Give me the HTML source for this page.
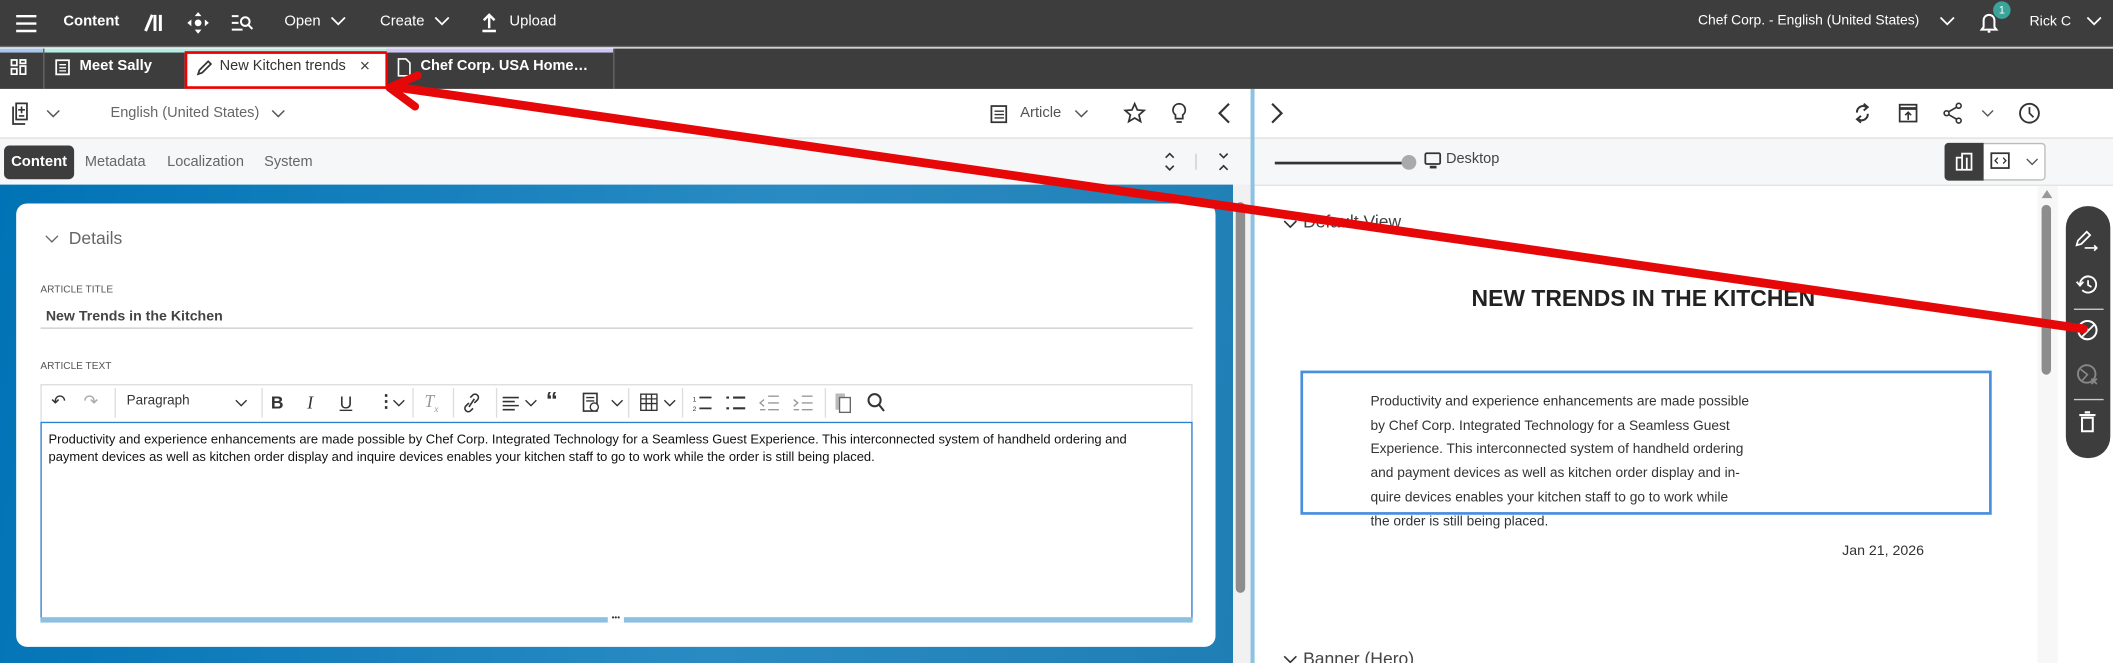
<!DOCTYPE html>
<html><head><meta charset="utf-8">
<style>
*{box-sizing:border-box;margin:0;padding:0}
html,body{width:2113px;height:663px;overflow:hidden;background:#fff}
#w{position:absolute;left:0;top:0;width:1568px;height:492px;transform:scale(1.34758);transform-origin:0 0;font-family:"Liberation Sans",sans-serif;color:#333;overflow:hidden}
.a{position:absolute;white-space:nowrap}
.wt{color:#fff}
.t12{font-size:11px}
svg{overflow:visible}
</style></head><body><div id="w">

<!-- top bar -->
<div class="a" style="left:0;top:0;width:1568px;height:35px;background:#3d3d3d;border-bottom:1px solid #6a6a6a"></div>
<svg class="a" style="left:12px;top:11px" width="16" height="13"><path d="M0 1h15M0 6.5h15M0 12h15" stroke="#fff" stroke-width="1.8"/></svg>
<div class="a wt t12" style="left:47px;top:10px;font-weight:bold">Content</div>
<svg class="a" style="left:106px;top:9px" width="16" height="16"><path d="M2 14L7 2M9 2v12M13 2v12" stroke="#fff" stroke-width="2.2"/></svg>
<svg class="a" style="left:139px;top:9px" width="16" height="16"><circle cx="8" cy="8" r="2.5" fill="#fff"/><path d="M8 0l-2.5 3h5zM8 16l-2.5-3h5zM0 8l3-2.5v5zM16 8l-3-2.5v5z" fill="#fff"/></svg>
<svg class="a" style="left:172px;top:10px" width="16" height="14"><path d="M0 2h5M0 7h5M0 12h8" stroke="#fff" stroke-width="1.5"/><circle cx="10" cy="6" r="3.2" fill="none" stroke="#fff" stroke-width="1.5"/><path d="M12.3 8.5l3 3" stroke="#fff" stroke-width="1.5"/></svg>
<div class="a wt t12" style="left:211px;top:10px">Open</div>
<svg class="a" style="left:246px;top:13px" width="10" height="6"><path d="M0 0l5 5 5-5" fill="none" stroke="#fff" stroke-width="1.3"/></svg>
<div class="a wt t12" style="left:282px;top:10px">Create</div>
<svg class="a" style="left:323px;top:13px" width="10" height="6"><path d="M0 0l5 5 5-5" fill="none" stroke="#fff" stroke-width="1.3"/></svg>
<svg class="a" style="left:357px;top:9px" width="12" height="15"><path d="M6 12V2M2 6l4-4 4 4M1 14h10" fill="none" stroke="#fff" stroke-width="1.8"/></svg>
<div class="a wt t12" style="left:378px;top:10px">Upload</div>
<div class="a wt" style="left:1260px;top:10px;font-size:10.3px">Chef Corp. - English (United States)</div>
<svg class="a" style="left:1440px;top:13px" width="10" height="6"><path d="M0 0l5 5 5-5" fill="none" stroke="#fff" stroke-width="1.3"/></svg>
<svg class="a" style="left:1469px;top:8px" width="14" height="17"><path d="M3 12V7a4 4 0 0 1 8 0v5l1.5 2h-11z" fill="none" stroke="#fff" stroke-width="1.5"/><path d="M6 15.5h2" stroke="#fff" stroke-width="1.5"/></svg>
<div class="a" style="left:1479px;top:1px;width:13px;height:13px;border-radius:50%;background:#3aa39a;color:#fff;font-size:8px;text-align:center;line-height:13px">1</div>
<div class="a wt" style="left:1506px;top:10px;font-size:10.5px">Rick C</div>
<svg class="a" style="left:1549px;top:13px" width="10" height="6"><path d="M0 0l5 5 5-5" fill="none" stroke="#fff" stroke-width="1.3"/></svg>

<!-- tab bar -->
<div class="a" style="left:0;top:36px;width:1568px;height:30px;background:#3d3d3d"></div>
<div class="a" style="left:0;top:36px;width:32px;height:3px;background:#a9c7ea"></div>
<svg class="a" style="left:8px;top:44px" width="12" height="12"><g fill="none" stroke="#fff" stroke-width="1.3"><rect x=".5" y=".5" width="4" height="4"/><rect x="7" y=".5" width="4" height="2.5"/><rect x=".5" y="7" width="4" height="4"/><rect x="7" y="5" width="4" height="6"/></g></svg>
<div class="a" style="left:32px;top:36px;width:1px;height:30px;background:#666"></div>
<div class="a" style="left:33px;top:36px;width:104px;height:3px;background:#b7ebe2"></div>
<svg class="a" style="left:41px;top:44px" width="11" height="12"><rect x=".7" y=".7" width="9.5" height="10.5" fill="none" stroke="#fff" stroke-width="1.3"/><path d="M3 4h5M3 6.3h5M3 8.6h5" stroke="#fff" stroke-width="1"/></svg>
<div class="a wt t12" style="left:59px;top:43px;font-weight:bold">Meet Sally</div>
<div class="a" style="left:137px;top:36px;width:150px;height:30px;background:#fff"></div>
<div class="a" style="left:137px;top:36px;width:150px;height:3px;background:#b7ebe2"></div>
<div class="a" style="left:137px;top:38px;width:151px;height:28px;border:2px solid #e00"></div>
<svg class="a" style="left:146px;top:44px" width="12" height="12"><path d="M1 11l1-3 6.5-6.5 2 2L4 10z" fill="none" stroke="#333" stroke-width="1.3"/></svg>
<div class="a" style="left:163px;top:43px;color:#333;font-size:10.8px">New Kitchen trends</div>
<div class="a" style="left:267px;top:41px;font-size:13px;color:#444">×</div>
<div class="a" style="left:287px;top:36px;width:168px;height:3px;background:#cfc6f3"></div>
<div class="a" style="left:455px;top:36px;width:1px;height:30px;background:#666"></div>
<svg class="a" style="left:295px;top:43px" width="10" height="14"><path d="M.7.7h5.5l3 3v9.6H.7z" fill="none" stroke="#fff" stroke-width="1.2"/></svg>
<div class="a wt" style="left:312px;top:43px;font-weight:bold;font-size:10.8px">Chef Corp. USA Home…</div>

<!-- left toolbar -->
<div class="a" style="left:0;top:66px;width:928px;height:37px;background:#fff;border-bottom:1px solid #ddd"></div>
<svg class="a" style="left:9px;top:76px" width="14" height="17"><path d="M3 .7h8v12H3z M.7 3v13h9" fill="none" stroke="#333" stroke-width="1.3"/><path d="M7 3v5M4.5 5.5h5M5 10h4" stroke="#333" stroke-width="1.2"/></svg>
<svg class="a" style="left:35px;top:82px" width="9" height="5"><path d="M0 0l4.5 4.5L9 0" fill="none" stroke="#555" stroke-width="1.1"/></svg>
<div class="a" style="left:82px;top:78px;color:#666;font-size:10.8px">English (United States)</div>
<svg class="a" style="left:202px;top:82px" width="9" height="5"><path d="M0 0l4.5 4.5L9 0" fill="none" stroke="#555" stroke-width="1.1"/></svg>
<svg class="a" style="left:735px;top:78px" width="13" height="14"><rect x=".7" y=".7" width="11" height="12" fill="none" stroke="#333" stroke-width="1.3"/><path d="M3 4.5h7M3 7h7M3 9.5h7" stroke="#333"/></svg>
<div class="a t12" style="left:757px;top:78px;color:#555">Article</div>
<svg class="a" style="left:798px;top:82px" width="9" height="5"><path d="M0 0l4.5 4.5L9 0" fill="none" stroke="#555" stroke-width="1.1"/></svg>
<svg class="a" style="left:834px;top:76px" width="16" height="16"><path d="M8 1l2 4.6 5 .4-3.8 3.3 1.2 4.9L8 11.6 3.6 14.2l1.2-4.9L1 6l5-.4z" fill="none" stroke="#333" stroke-width="1.3"/></svg>
<svg class="a" style="left:869px;top:76px" width="12" height="16"><path d="M6 1a4.6 4.6 0 0 0-2.7 8.3V12h5.4V9.3A4.6 4.6 0 0 0 6 1zM4 14.5h4" fill="none" stroke="#333" stroke-width="1.3"/></svg>
<svg class="a" style="left:904px;top:76px" width="9" height="16"><path d="M8 1L1 8l7 7" fill="none" stroke="#333" stroke-width="1.6"/></svg>

<!-- left tabs row -->
<div class="a" style="left:0;top:103px;width:928px;height:35px;background:#f6f7f8"></div>
<div class="a" style="left:3px;top:108px;width:52px;height:25px;background:#3d3d3d;border-radius:4px;color:#fff;font-size:11px;font-weight:bold;text-align:center;line-height:25px">Content</div>
<div class="a" style="left:63px;top:114px;color:#666;font-size:10.8px">Metadata</div>
<div class="a" style="left:124px;top:114px;color:#666;font-size:10.8px">Localization</div>
<div class="a" style="left:196px;top:114px;color:#666;font-size:10.8px">System</div>
<svg class="a" style="left:864px;top:113px" width="8" height="14"><path d="M1 4l3-3 3 3M1 10l3 3 3-3" fill="none" stroke="#333" stroke-width="1.2"/></svg>
<div class="a" style="left:887px;top:114px;width:1px;height:12px;background:#ccc"></div>
<svg class="a" style="left:904px;top:113px" width="8" height="14"><path d="M1 1l3 3 3-3M1 13l3-3 3 3" fill="none" stroke="#333" stroke-width="1.2"/></svg>

<!-- blue area -->
<div class="a" style="left:0;top:137px;width:915px;height:355px;background:linear-gradient(100deg,#0073b6 0%,#2a8bc2 60%,#1f7fb5 100%)"></div>
<div class="a" style="left:915px;top:137px;width:13px;height:355px;background:#f1f1f1"></div>
<div class="a" style="left:917px;top:150px;width:7px;height:290px;background:#8d8d8d;border-radius:4px"></div>
<div class="a" style="left:928px;top:66px;width:3px;height:426px;background:#8cc3e3"></div>

<!-- card -->
<div class="a" style="left:12px;top:151px;width:890px;height:329px;background:#fff;border-radius:8px"></div>
<svg class="a" style="left:34px;top:175px" width="9" height="5"><path d="M0 0l4.5 4.5L9 0" fill="none" stroke="#666" stroke-width="1"/></svg>
<div class="a" style="left:51px;top:169px;font-size:13px;color:#666">Details</div>
<div class="a" style="left:30px;top:210px;font-size:7.5px;color:#555">ARTICLE TITLE</div>
<div class="a" style="left:34px;top:229px;font-size:10.5px;color:#444;font-weight:bold">New Trends in the Kitchen</div>
<div class="a" style="left:30px;top:243px;width:855px;height:1px;background:#ccc"></div>
<div class="a" style="left:30px;top:267px;font-size:7.5px;color:#555">ARTICLE TEXT</div>
<!-- editor toolbar -->
<div class="a" style="left:30px;top:285px;width:855px;height:29px;border:1px solid #ddd;border-bottom:none;background:#fff"></div>
<div class="a" style="left:30px;top:285px;width:855px;height:29px;font-size:13px;color:#333">
 <span class="a" style="left:8px;top:5px">↶</span><span class="a" style="left:32px;top:5px;color:#aaa">↷</span>
 <span class="a" style="left:55px;top:3px;width:1px;height:22px;background:#ddd"></span>
 <span class="a" style="left:64px;top:7px;font-size:10px">Paragraph</span>
 <svg class="a" style="left:145px;top:12px" width="8" height="5"><path d="M0 0l4 4 4-4" fill="none" stroke="#333"/></svg>
 <span class="a" style="left:164px;top:3px;width:1px;height:22px;background:#ddd"></span>
 <span class="a" style="left:171px;top:6px;font-weight:bold">B</span>
 <span class="a" style="left:198px;top:6px;font-style:italic;font-family:'Liberation Serif',serif">I</span>
 <span class="a" style="left:222px;top:6px;text-decoration:underline">U</span>
 <span class="a" style="left:250px;top:5px;font-weight:bold">⋮</span>
 <svg class="a" style="left:262px;top:12px" width="8" height="5"><path d="M0 0l4 4 4-4" fill="none" stroke="#333"/></svg>
 <span class="a" style="left:276px;top:3px;width:1px;height:22px;background:#ddd"></span>
 <span class="a" style="left:285px;top:5px;color:#999;font-style:italic;font-family:'Liberation Serif',serif">T<sub style="font-size:7px">x</sub></span>
 <span class="a" style="left:306px;top:3px;width:1px;height:22px;background:#ddd"></span>
 <svg class="a" style="left:314px;top:7px" width="12" height="14"><path d="M5 3l2-2a2.5 2.5 0 0 1 3.5 3.5L8 7M7 11l-2 2A2.5 2.5 0 0 1 1.5 9.5L4 7M4 10l4-6" fill="none" stroke="#333" stroke-width="1.2"/></svg>
 <span class="a" style="left:338px;top:3px;width:1px;height:22px;background:#ddd"></span>
 <svg class="a" style="left:343px;top:9px" width="13" height="11"><path d="M0 1h12M0 4h9M0 7h12M0 10h9" stroke="#333" stroke-width="1.2"/></svg>
 <svg class="a" style="left:360px;top:12px" width="8" height="5"><path d="M0 0l4 4 4-4" fill="none" stroke="#333"/></svg>
 <span class="a" style="left:375px;top:2px;font-size:18px;font-weight:bold">“</span>
 <svg class="a" style="left:402px;top:6px" width="14" height="16"><path d="M1 1h10v13H1z" fill="none" stroke="#333" stroke-width="1.2"/><path d="M3 4h6M3 6.5h6" stroke="#333"/><circle cx="9" cy="11" r="3" fill="#fff" stroke="#333"/></svg>
 <svg class="a" style="left:424px;top:12px" width="8" height="5"><path d="M0 0l4 4 4-4" fill="none" stroke="#333"/></svg>
 <span class="a" style="left:436px;top:3px;width:1px;height:22px;background:#ddd"></span>
 <svg class="a" style="left:445px;top:7px" width="13" height="13"><rect x=".5" y=".5" width="12" height="12" fill="none" stroke="#333"/><path d="M.5 4h12M.5 7.5h12M4.5 .5v12M8.5 .5v12" stroke="#333"/></svg>
 <svg class="a" style="left:463px;top:12px" width="8" height="5"><path d="M0 0l4 4 4-4" fill="none" stroke="#333"/></svg>
 <span class="a" style="left:476px;top:3px;width:1px;height:22px;background:#ddd"></span>
 <svg class="a" style="left:484px;top:8px" width="14" height="12"><path d="M5 2h9M5 10h9" stroke="#333" stroke-width="1.3"/><text x="0" y="5" font-size="5" fill="#333">1</text><text x="0" y="12" font-size="5" fill="#333">2</text></svg>
 <svg class="a" style="left:509px;top:8px" width="14" height="12"><path d="M5 2h9M5 10h9M0 2h2M0 10h2" stroke="#333" stroke-width="1.6"/></svg>
 <svg class="a" style="left:534px;top:8px" width="14" height="12"><path d="M6 1h8M6 6h8M6 11h8M0 11h4" stroke="#999" stroke-width="1"/><path d="M3 3.5L0 6l3 2.5" fill="none" stroke="#999"/></svg>
 <svg class="a" style="left:559px;top:8px" width="14" height="12"><path d="M6 1h8M6 6h8M6 11h8M0 11h4" stroke="#999" stroke-width="1"/><path d="M0 3.5L3 6 0 8.5" fill="none" stroke="#999"/></svg>
 <span class="a" style="left:582px;top:3px;width:1px;height:22px;background:#ddd"></span>
 <svg class="a" style="left:589px;top:6px" width="13" height="16"><rect x="1" y="1" width="7" height="12" fill="#bbb"/><rect x="4" y="4" width="8" height="11" fill="#fff" stroke="#666"/></svg>
 <svg class="a" style="left:613px;top:6px" width="14" height="15"><circle cx="6" cy="6" r="4.5" fill="none" stroke="#333" stroke-width="1.5"/><path d="M9 9l4 5" stroke="#333" stroke-width="1.5"/></svg>
</div>
<div class="a" style="left:30px;top:313px;width:855px;height:147px;border:1px solid #2f7ed0;background:#fff"></div>
<div class="a" style="left:36px;top:321px;width:845px;font-size:9.6px;line-height:12.5px;color:#111;white-space:normal">Productivity and experience enhancements are made possible by Chef Corp. Integrated Technology for a Seamless Guest Experience. This interconnected system of handheld ordering and<br>payment devices as well as kitchen order display and inquire devices enables your kitchen staff to go to work while the order is still being placed.</div>
<div class="a" style="left:30px;top:458px;width:855px;height:4px;background:#8cbfe0"></div>
<div class="a" style="left:451px;top:457px;width:12px;height:5px;background:#fff;font-size:6px;line-height:4px;text-align:center;color:#333">•••</div>

<!-- right panel -->
<div class="a" style="left:931px;top:66px;width:637px;height:37px;background:#fff;border-bottom:1px solid #ddd"></div>
<svg class="a" style="left:943px;top:76px" width="9" height="16"><path d="M1 1l7 7-7 7" fill="none" stroke="#333" stroke-width="1.6"/></svg>
<svg class="a" style="left:1376px;top:76px" width="12" height="16"><path d="M9 3.5A4.5 4.5 0 0 0 2 7.5M3 12.5a4.5 4.5 0 0 0 7-4" fill="none" stroke="#333" stroke-width="1.5"/><path d="M7 1l3 2.5L7 6M5 10l-3 2.5L5 15" fill="none" stroke="#333" stroke-width="1.4"/></svg>
<svg class="a" style="left:1409px;top:77px" width="14" height="14"><rect x=".7" y=".7" width="12.5" height="12.5" fill="none" stroke="#333" stroke-width="1.3"/><path d="M.7 3.5h12.5" stroke="#333" stroke-width="2"/><path d="M7 12V6.5M4.8 8.5L7 6.3l2.2 2.2" fill="none" stroke="#333" stroke-width="1.2"/></svg>
<svg class="a" style="left:1442px;top:76px" width="14" height="16"><circle cx="11.5" cy="2.5" r="1.8" fill="none" stroke="#333" stroke-width="1.2"/><circle cx="2.5" cy="8" r="1.8" fill="none" stroke="#333" stroke-width="1.2"/><circle cx="11.5" cy="13.5" r="1.8" fill="none" stroke="#333" stroke-width="1.2"/><path d="M4 7l6-3.5M4 9l6 3.5" stroke="#333" stroke-width="1.2"/></svg>
<svg class="a" style="left:1471px;top:82px" width="8" height="5"><path d="M0 0l4 4 4-4" fill="none" stroke="#555"/></svg>
<svg class="a" style="left:1498px;top:76px" width="16" height="16"><circle cx="8" cy="8" r="7" fill="none" stroke="#333" stroke-width="1.4"/><path d="M8 3.5V8l3 3" fill="none" stroke="#333" stroke-width="1.3"/></svg>

<div class="a" style="left:931px;top:103px;width:637px;height:35px;background:#f6f7f8;border-bottom:1px solid #e3e3e3"></div>
<div class="a" style="left:946px;top:120px;width:97px;height:1.5px;background:#333"></div>
<div class="a" style="left:1040px;top:115px;width:11px;height:11px;border-radius:50%;background:#aaa"></div>
<svg class="a" style="left:1057px;top:113px" width="13" height="13"><rect x=".7" y=".7" width="11" height="8" rx="1" fill="none" stroke="#333" stroke-width="1.3"/><path d="M4 11h5" stroke="#333" stroke-width="2"/></svg>
<div class="a" style="left:1073px;top:112px;font-size:10.8px;color:#444">Desktop</div>
<div class="a" style="left:1443px;top:106px;width:75px;height:28px;border:1px solid #bbb;border-radius:3px;background:#fff"></div>
<div class="a" style="left:1443px;top:106px;width:29px;height:28px;background:#3d3d3d;border-radius:3px 0 0 3px"></div>
<svg class="a" style="left:1451px;top:113px" width="13" height="14"><path d="M1 13V4h4V1h7v12zM5 4v9M8.5 4v9" fill="none" stroke="#fff" stroke-width="1.3"/></svg>
<svg class="a" style="left:1477px;top:113px" width="15" height="13"><rect x=".7" y=".7" width="13" height="11" fill="none" stroke="#333" stroke-width="1.3"/><path d="M5.5 4L3.5 6.2 5.5 8.4M9.5 4l2 2.2-2 2.2" fill="none" stroke="#333"/></svg>
<svg class="a" style="left:1504px;top:118px" width="8" height="5"><path d="M0 0l4 4 4-4" fill="none" stroke="#555"/></svg>

<svg class="a" style="left:953px;top:164px" width="9" height="5"><path d="M0 0l4.5 4.5L9 0" fill="none" stroke="#333" stroke-width="1.2"/></svg>
<div class="a" style="left:967px;top:157px;font-size:13px;color:#444">Default View</div>
<div class="a" style="left:1092px;top:212px;font-size:17px;font-weight:bold;color:#222;letter-spacing:0">NEW TRENDS IN THE KITCHEN</div>
<div class="a" style="left:965px;top:275px;width:513px;height:107px;border:2px solid #4a8fde"></div>
<div class="a" style="left:1017px;top:290px;width:300px;font-size:10.2px;line-height:17.7px;color:#333">Productivity and experience enhancements are made possible<br>by Chef Corp. Integrated Technology for a Seamless Guest<br>Experience. This interconnected system of handheld ordering<br>and payment devices as well as kitchen order display and in-<br>quire devices enables your kitchen staff to go to work while<br>the order is still being placed.</div>
<div class="a" style="left:1367px;top:403px;font-size:10.5px;color:#333">Jan 21, 2026</div>
<svg class="a" style="left:953px;top:487px" width="9" height="5"><path d="M0 0l4.5 4.5L9 0" fill="none" stroke="#333" stroke-width="1.2"/></svg>
<div class="a" style="left:967px;top:481px;font-size:13px;color:#444">Banner (Hero)</div>

<!-- right scrollbar & floating toolbar -->
<div class="a" style="left:1512px;top:138px;width:15px;height:354px;background:#f7f7f7"></div>
<svg class="a" style="left:1515px;top:141px" width="8" height="6"><path d="M4 0L8 6H0z" fill="#999"/></svg>
<div class="a" style="left:1515px;top:152px;width:7px;height:126px;background:#8d8d8d;border-radius:4px"></div>
<div class="a" style="left:1533px;top:153px;width:33px;height:187px;background:#3d3d3d;border-radius:16px"></div>
<svg class="a" style="left:1540px;top:170px" width="18" height="16"><path d="M1 12l1-3.5 6.5-6.5 2.5 2.5L4.5 11z" fill="none" stroke="#fff" stroke-width="1.3"/><path d="M7 14h9M14 12l2 2-2 2" fill="none" stroke="#fff" stroke-width="1.2"/></svg>
<svg class="a" style="left:1540px;top:203px" width="17" height="16"><path d="M3.5 8a6 6 0 1 1 1.7 4.3" fill="none" stroke="#fff" stroke-width="1.4"/><path d="M1 6l2.5 3L6 6" fill="none" stroke="#fff" stroke-width="1.3"/><path d="M9.5 5v3.5l2.5 1.5" fill="none" stroke="#fff" stroke-width="1.3"/></svg>
<div class="a" style="left:1539px;top:229px;width:22px;height:1px;background:#ccc"></div>
<svg class="a" style="left:1541px;top:237px" width="16" height="16"><circle cx="8" cy="8" r="6.8" fill="none" stroke="#fff" stroke-width="1.5"/><path d="M3 4l6 4-5 5M13 4L9 8" fill="none" stroke="#fff" stroke-width="1.3"/></svg>
<svg class="a" style="left:1541px;top:270px" width="17" height="17"><circle cx="7.5" cy="7.5" r="6.5" fill="none" stroke="#888" stroke-width="1.4"/><path d="M3 4l5 4-4 4.5" fill="none" stroke="#888" stroke-width="1.2"/><path d="M11 11l4 4M15 11l-4 4" stroke="#888" stroke-width="1.3"/></svg>
<div class="a" style="left:1539px;top:296px;width:22px;height:1px;background:#ccc"></div>
<svg class="a" style="left:1543px;top:306px" width="12" height="15"><path d="M0 2h12M4 0h4" stroke="#fff" stroke-width="1.6"/><path d="M2 4h8v10H2z" fill="none" stroke="#fff" stroke-width="1.5"/></svg>

<!-- red arrow -->
<svg class="a" style="left:0;top:0" width="1568" height="492">
<path d="M1546 244L296 65" stroke="#e60808" stroke-width="6.5" stroke-linecap="round"/>
<path d="M310 56L289 65 308 79" fill="none" stroke="#e60808" stroke-width="6" stroke-linecap="round" stroke-linejoin="round"/>
</svg>

</div></body></html>
